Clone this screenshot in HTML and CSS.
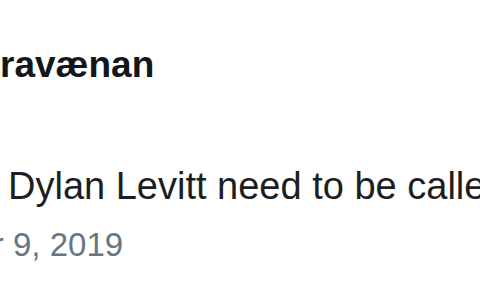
FILE: index.html
```html
<!DOCTYPE html>
<html lang="en">
<head>
    <meta charset="UTF-8">
    <meta name="viewport" content="width=device-width, initial-scale=1.0">
    <title>Tweet</title>
    <link rel="stylesheet" href="styles.css">
</head>
<body>
    <div class="tweet">
        <div class="tweet-name">ravænan</div>
        <p class="tweet-text">Dylan Levitt need to be called up</p>
        <div class="tweet-date">Mar 9, 2019</div>
    </div>
</body>
</html>
```

FILE: styles.css
```css
body {
    margin: 0;
    background: #ffffff;
    font-family: "Liberation Sans", Arial, sans-serif;
    overflow: hidden;
}

.tweet {
    padding-top: 43px;
    white-space: nowrap;
}

.tweet-name {
    font-size: 37px;
    line-height: 44px;
    font-weight: bold;
    color: #14171a;
}

.tweet-text {
    margin: 77px 0 0;
    padding-left: 8px;
    font-size: 38px;
    line-height: 44px;
    color: #1c1e21;
}

.tweet-date {
    margin: 17px 0 0 -53px;
    font-size: 33px;
    line-height: 40px;
    color: #657786;
}
```
